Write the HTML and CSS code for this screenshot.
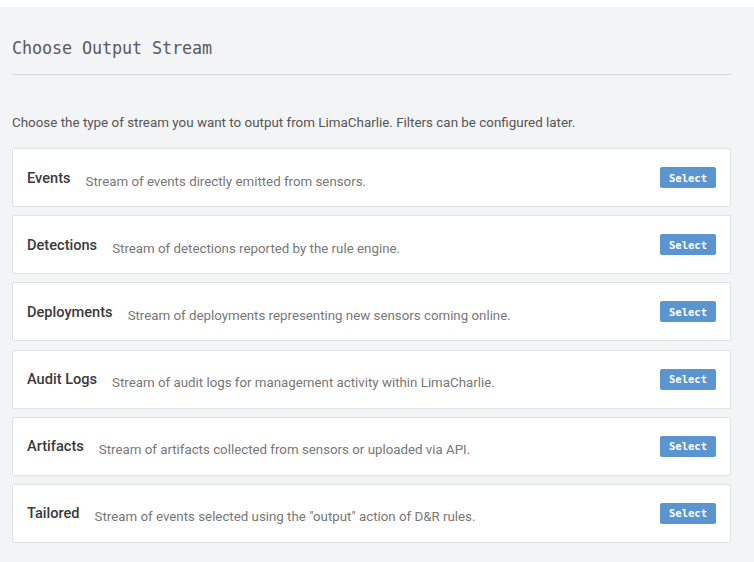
FILE: index.html
```html
<!DOCTYPE html>
<html>
<head>
<meta charset="utf-8">
<link rel="stylesheet" href="styles.css">
</head>
<body>
<div class="topbar"></div>
<main class="panel">
  <h1 class="title">Choose Output Stream</h1>
  <hr class="rule">
  <p class="intro">Choose the type of stream you want to output from LimaCharlie. Filters can be configured later.</p>
  <div class="list">
    <div class="card">
      <span class="name">Events</span>
      <span class="desc">Stream of events directly emitted from sensors.</span>
      <button class="btn">Select</button>
    </div>
    <div class="card">
      <span class="name">Detections</span>
      <span class="desc">Stream of detections reported by the rule engine.</span>
      <button class="btn">Select</button>
    </div>
    <div class="card">
      <span class="name">Deployments</span>
      <span class="desc">Stream of deployments representing new sensors coming online.</span>
      <button class="btn">Select</button>
    </div>
    <div class="card">
      <span class="name">Audit Logs</span>
      <span class="desc">Stream of audit logs for management activity within LimaCharlie.</span>
      <button class="btn">Select</button>
    </div>
    <div class="card">
      <span class="name">Artifacts</span>
      <span class="desc">Stream of artifacts collected from sensors or uploaded via API.</span>
      <button class="btn">Select</button>
    </div>
    <div class="card">
      <span class="name">Tailored</span>
      <span class="desc">Stream of events selected using the "output" action of D&amp;R rules.</span>
      <button class="btn">Select</button>
    </div>
  </div>
</main>
</body>
</html>
```

FILE: styles.css
```css
html, body {
  margin: 0;
  padding: 0;
  background: #f3f4f6;
  font-family: Roboto, "Liberation Sans", sans-serif;
}
.topbar {
  height: 7px;
  background: #ffffff;
}
.panel {
  padding: 0 23px 0 12px;
}
.title {
  margin: 0;
  padding-top: 31px;
  font-family: "DejaVu Sans Mono", "Liberation Mono", monospace;
  font-size: 16.8px;
  font-weight: normal;
  line-height: 20px;
  color: #5a5a5a;
  letter-spacing: -0.1px;
}
.rule {
  margin: 16px 0 0 0;
  border: 0;
  border-top: 1px solid #d9dadc;
  height: 0;
}
.intro {
  margin: 40px 0 0 0;
  font-size: 13.4px;
  line-height: 16px;
  color: #555;
}
.list {
  margin-top: 17px;
  display: flex;
  flex-direction: column;
  gap: 8.2px;
}
.card {
  height: 57px;
  background: #ffffff;
  border: 1px solid #e0e1e3;
  border-radius: 2px;
  display: flex;
  align-items: center;
  padding: 0 14px 0 14px;
}
.name {
  font-size: 14.6px;
  font-weight: 500;
  color: #3a3a3a;
  margin-right: 15px;
}
.desc {
  font-size: 13.3px;
  color: #777;
  margin-top: 7px;
  flex: 1;
}
.btn {
  width: 56px;
  height: 21px;
  border: 0;
  border-radius: 2px;
  background: #5a95cf;
  color: #fff;
  font-family: "DejaVu Sans Mono", "Liberation Mono", monospace;
  font-weight: bold;
  font-size: 10.5px;
  padding: 0;
}
```
